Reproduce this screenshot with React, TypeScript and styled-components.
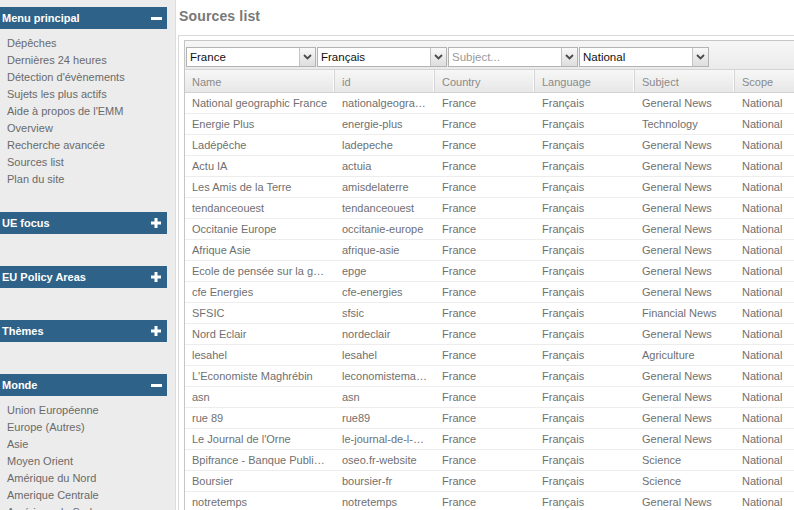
import React from "react";
import styled, { createGlobalStyle } from "styled-components";

const Global = createGlobalStyle`
  html, body { margin: 0; padding: 0; overflow: hidden; background: #fff; }
  body { font-family: "Liberation Sans", Arial, sans-serif; }
  * { box-sizing: border-box; }
`;

const Page = styled.div`
  display: flex;
  width: 794px;
  height: 510px;
  overflow: hidden;
`;

const Sidebar = styled.aside`
  flex: 0 0 176px;
  background: #ececec;
  border-right: 1px solid #dedede;
  padding-top: 7px;
  overflow: hidden;
`;

const Section = styled.section<{ $open: boolean }>`
  margin-bottom: ${(p) => (p.$open ? "24px" : "32px")};
`;

const SectionHeader = styled.div`
  width: 167px;
  height: 22px;
  background: #2f6288;
  color: #fff;
  font-size: 11px;
  font-weight: bold;
  display: flex;
  align-items: center;
  justify-content: space-between;
  padding: 0 5px 0 2px;
`;

const MenuList = styled.ul`
  list-style: none;
  margin: 0;
  padding: 6px 0 0 7px;
`;

const MenuItem = styled.li`
  font-size: 11px;
  line-height: 17px;
  height: 17px;
  color: #6a6a6a;
  white-space: nowrap;
`;

const Main = styled.main`
  flex: 1 1 auto;
  min-width: 0;
  overflow: hidden;
  padding-left: 2px;
`;

const Title = styled.h1`
  margin: 0;
  padding: 8px 0 0 1px;
  font-size: 14px;
  line-height: 16px;
  font-weight: bold;
  color: #787878;
  letter-spacing: 0.15px;
`;

const Panel = styled.div`
  margin-top: 11px;
  width: max-content;
  border: 1px solid #d9d9d9;
  padding: 4px 5px;
`;

const GridBox = styled.div`
  border: 1px solid #c6c6c6;
  background: #fff;
`;

const Toolbar = styled.div`
  display: flex;
  gap: 1px;
  padding: 6px 1px 2px 1px;
  background: linear-gradient(#f6f6f6, #ebebeb);
  border-bottom: 1px solid #d4d4d4;
`;

const SelectBox = styled.div`
  width: 130px;
  height: 20px;
  display: flex;
  border: 1px solid #b3b3b3;
  background: #fff;
`;

const SelectText = styled.div<{ $placeholder?: boolean }>`
  flex: 1;
  font-size: 11.5px;
  line-height: 18px;
  padding-left: 3px;
  color: ${(p) => (p.$placeholder ? "#9a9a9a" : "#111")};
  white-space: nowrap;
  overflow: hidden;
`;

const SelectArrow = styled.div`
  width: 16px;
  border-left: 1px solid #c4c4c4;
  background: linear-gradient(#f8f8f8, #dedede);
  display: flex;
  align-items: center;
  justify-content: center;
`;

const HeaderRow = styled.div`
  display: grid;
  grid-template-columns: 150px repeat(5, 100px);
  height: 23px;
  background: linear-gradient(#f7f7f7, #e7e7e7);
  border-bottom: 1px solid #d2d2d2;
`;

const HeaderCell = styled.div`
  font-size: 11px;
  line-height: 24px;
  color: #8a8a8a;
  padding-left: 7px;
  border-right: 1px solid #d6d6d6;
  box-shadow: inset -1px 0 0 #fafafa;
  white-space: nowrap;
  overflow: hidden;
`;

const Row = styled.div`
  display: grid;
  grid-template-columns: 150px repeat(5, 100px);
  height: 21px;
  border-bottom: 1px solid #ededed;
`;

const Cell = styled.div`
  font-size: 11px;
  line-height: 20px;
  color: #707070;
  padding: 0 6px 0 7px;
  white-space: nowrap;
  overflow: hidden;
  text-overflow: ellipsis;
`;

const Minus = () => (
  <svg width="11" height="3" viewBox="0 0 11 3">
    <rect width="11" height="3" fill="#fff" />
  </svg>
);

const Plus = () => (
  <svg width="10" height="10" viewBox="0 0 10 10" style={{ marginRight: 1 }}>
    <rect x="3.5" y="0" width="3" height="10" fill="#fff" />
    <rect x="0" y="3.5" width="10" height="3" fill="#fff" />
  </svg>
);

const Chevron = () => (
  <svg width="9" height="6" viewBox="0 0 9 6">
    <polyline points="1,1 4.5,4.5 8,1" fill="none" stroke="#4a4a4a" strokeWidth="1.8" />
  </svg>
);

const mainMenu = [
  "Dépêches",
  "Dernières 24 heures",
  "Détection d'évènements",
  "Sujets les plus actifs",
  "Aide à propos de l'EMM",
  "Overview",
  "Recherche avancée",
  "Sources list",
  "Plan du site",
];

const monde = [
  "Union Européenne",
  "Europe (Autres)",
  "Asie",
  "Moyen Orient",
  "Amérique du Nord",
  "Amerique Centrale",
  "Amérique du Sud",
];

const rows: [string, string, string][] = [
  ["National geographic France", "nationalgeographic", "General News"],
  ["Energie Plus", "energie-plus", "Technology"],
  ["Ladépêche", "ladepeche", "General News"],
  ["Actu IA", "actuia", "General News"],
  ["Les Amis de la Terre", "amisdelaterre", "General News"],
  ["tendanceouest", "tendanceouest", "General News"],
  ["Occitanie Europe", "occitanie-europe", "General News"],
  ["Afrique Asie", "afrique-asie", "General News"],
  ["Ecole de pensée sur la guerre économique", "epge", "General News"],
  ["cfe Energies", "cfe-energies", "General News"],
  ["SFSIC", "sfsic", "Financial News"],
  ["Nord Eclair", "nordeclair", "General News"],
  ["lesahel", "lesahel", "Agriculture"],
  ["L'Economiste Maghrébin", "leconomistemaghrebin", "General News"],
  ["asn", "asn", "General News"],
  ["rue 89", "rue89", "General News"],
  ["Le Journal de l'Orne", "le-journal-de-l-orne", "General News"],
  ["Bpifrance - Banque Publique d'Investissement", "oseo.fr-website", "Science"],
  ["Boursier", "boursier-fr", "Science"],
  ["notretemps", "notretemps", "General News"],
  ["Midi Libre", "midilibre", "General News"],
];

const filters: { label: string; placeholder?: boolean }[] = [
  { label: "France" },
  { label: "Français" },
  { label: "Subject...", placeholder: true },
  { label: "National" },
];

const columns = ["Name", "id", "Country", "Language", "Subject", "Scope"];

export default function App() {
  return (
    <>
      <Global />
      <Page>
        <Sidebar>
          <Section $open>
            <SectionHeader>
              <span>Menu principal</span>
              <Minus />
            </SectionHeader>
            <MenuList>
              {mainMenu.map((m) => (
                <MenuItem key={m}>{m}</MenuItem>
              ))}
            </MenuList>
          </Section>
          {["UE focus", "EU Policy Areas", "Thèmes"].map((h) => (
            <Section key={h} $open={false}>
              <SectionHeader>
                <span>{h}</span>
                <Plus />
              </SectionHeader>
            </Section>
          ))}
          <Section $open>
            <SectionHeader>
              <span>Monde</span>
              <Minus />
            </SectionHeader>
            <MenuList>
              {monde.map((m) => (
                <MenuItem key={m}>{m}</MenuItem>
              ))}
            </MenuList>
          </Section>
        </Sidebar>
        <Main>
          <Title>Sources list</Title>
          <Panel>
            <GridBox>
              <Toolbar>
                {filters.map((f) => (
                  <SelectBox key={f.label}>
                    <SelectText $placeholder={f.placeholder}>{f.label}</SelectText>
                    <SelectArrow>
                      <Chevron />
                    </SelectArrow>
                  </SelectBox>
                ))}
              </Toolbar>
              <HeaderRow>
                {columns.map((c) => (
                  <HeaderCell key={c}>{c}</HeaderCell>
                ))}
              </HeaderRow>
              {rows.map(([name, id, subject]) => (
                <Row key={id}>
                  <Cell>{name}</Cell>
                  <Cell>{id}</Cell>
                  <Cell>France</Cell>
                  <Cell>Français</Cell>
                  <Cell>{subject}</Cell>
                  <Cell>National</Cell>
                </Row>
              ))}
            </GridBox>
          </Panel>
        </Main>
      </Page>
    </>
  );
}
